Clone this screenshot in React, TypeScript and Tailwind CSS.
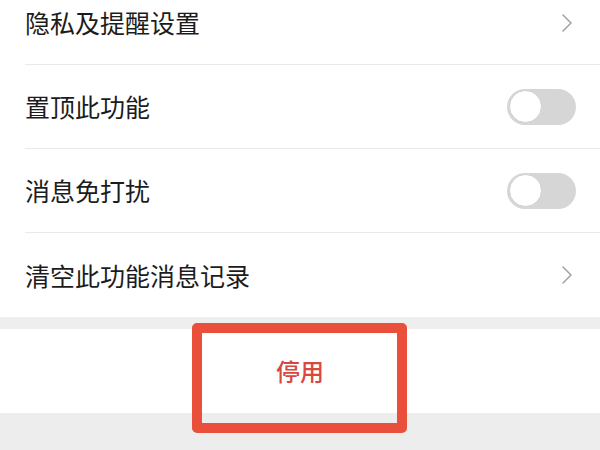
import {ReactNode} from 'react'

const Chevron = () => (
  <svg width="12" height="20" viewBox="0 0 12 20" className="text-[#a3a3a3]">
    <path d="M2 2 L10 10 L2 18" fill="none" stroke="currentColor" strokeWidth="1.6" strokeLinecap="round" strokeLinejoin="round" />
  </svg>
)

const Toggle = () => (
  <div className="w-[69px] h-[36px] rounded-full bg-[#d6d6d6] flex items-center p-[1.5px]">
    <div className="w-[33px] h-[33px] rounded-full bg-white border border-[#d0d0d0]"></div>
  </div>
)

const Row = ({label, right, last}: {label: string; right: ReactNode; last?: boolean}) => (
  <div className="h-[84px] pl-[25px] flex flex-col">
    <div className="flex-1 flex items-center justify-between pr-[24px]">
      <span className="text-[25px] leading-none text-[#1c1c1c]">{label}</span>
      {right}
    </div>
    {!last && <div className="h-px bg-[#e9e9e9]"></div>}
  </div>
)

export default function App() {
  return (
    <div
      className="w-[600px] h-[450px] overflow-hidden bg-[#ededed] relative"
      style={{fontFamily: '"Noto Sans CJK SC", "Noto Sans", sans-serif'}}
    >
      <div className="bg-white -mt-[19px]">
        <Row label="隐私及提醒设置" right={<div className="pr-[3px]"><Chevron /></div>} />
        <Row label="置顶此功能" right={<Toggle />} />
        <Row label="消息免打扰" right={<Toggle />} />
        <Row label="清空此功能消息记录" right={<div className="pr-[3px]"><Chevron /></div>} last />
      </div>
      <div className="h-[12px] bg-[#eeeeee]"></div>
      <div className="h-[84px] bg-white flex items-center justify-center">
        <span className="text-[24px] font-medium text-[#d9473f]">停用</span>
      </div>
      <div className="absolute left-[192px] top-[323px] w-[215px] h-[110px] border-[10px] border-[#e94f3b] rounded-[5px]"></div>
    </div>
  )
}
